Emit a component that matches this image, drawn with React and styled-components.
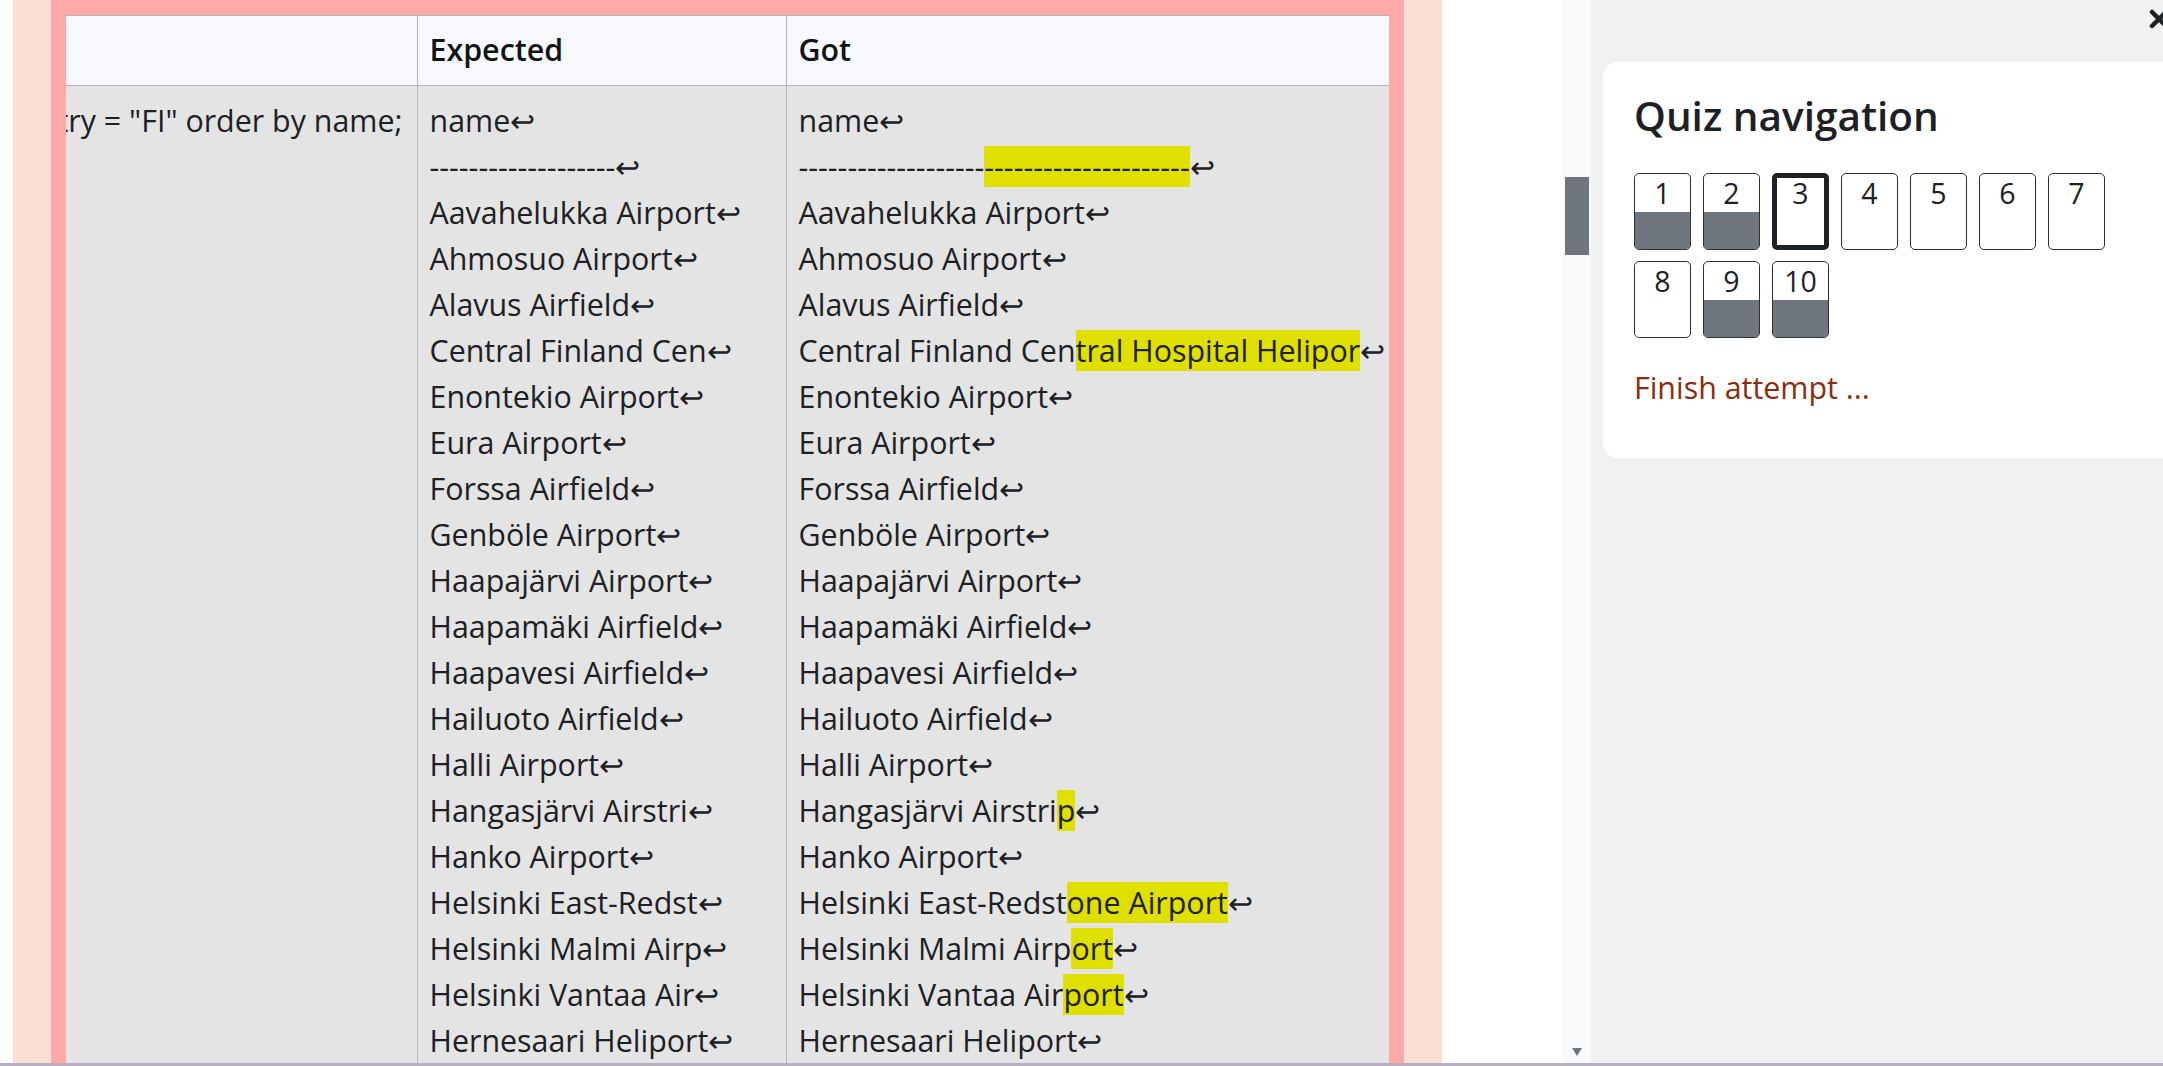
import React from "react";
import styled, { createGlobalStyle } from "styled-components";

const GlobalStyle = createGlobalStyle`
  html, body {
    margin: 0;
    padding: 0;
    height: 100%;
    overflow: hidden;
  }
  body {
    font-family: "Open Sans", "Liberation Sans", sans-serif;
    color: #1d2125;
    background: #ffffff;
  }
`;

const PageDiv = styled.div`
  display: flex;
  flex-direction: column;
  height: 100vh;
`;

const ScreenRowDiv = styled.div`
  display: flex;
  flex: 1;
  min-height: 0;
  overflow: hidden;
`;

const BottomEdgeDiv = styled.div`
  height: 3px;
  flex-shrink: 0;
  background: #b8b0c2;
`;

/* ---------- main column ---------- */

const MainDiv = styled.div`
  display: flex;
  width: 1591px;
  flex-shrink: 0;
  padding-left: 13px;
  box-sizing: border-box;
  background: #ffffff;
`;

const OutcomeDiv = styled.div`
  width: 1429px;
  flex-shrink: 0;
  padding: 0 38px;
  box-sizing: border-box;
  background: #fcdfd4;
`;

const FeedbackDiv = styled.div`
  height: 100%;
  padding: 15px 15px 0;
  box-sizing: border-box;
  background: #ffa8a8;
  overflow: hidden;
`;

const ResultTable = styled.table`
  width: 1323px;
  table-layout: fixed;
  border-collapse: collapse;
  font-size: 30.4px;
  line-height: 46px;
  border-top: 1px solid #b4b4b4;
`;

const HeadCell = styled.th`
  background: #f7f8fc;
  font-weight: 600;
  text-align: left;
  padding: 11px 12px 12px;
  border-bottom: 1px solid #b4b4b4;
  border-left: ${(p) => (p.$first ? "none" : "1px solid #b8b8b8")};
  color: #111417;
`;

const BodyCell = styled.td`
  background: #e4e4e4;
  vertical-align: top;
  padding: ${(p) => (p.$first ? "12px 14px 0 0" : "12px 12px 0")};
  border-left: ${(p) => (p.$first ? "none" : "1px solid #b8b8b8")};
  color: #1d2125;
`;

const QueryDiv = styled.div`
  display: flex;
  justify-content: flex-end;
  overflow: hidden;
  white-space: nowrap;
`;

const OutputLineDiv = styled.div`
  height: 46px;
  white-space: nowrap;
`;

const DiffSpan = styled.span`
  background: #e0e000;
`;

const ReturnSpan = styled.span`
  font-family: "DejaVu Sans", sans-serif;
  font-size: 30px;
  font-weight: 300;
  line-height: 0;
`;

const SpacerDiv = styled.div`
  flex: 1;
`;

const ScrollTrackDiv = styled.div`
  width: 28px;
  flex-shrink: 0;
  display: flex;
  flex-direction: column;
  align-items: center;
  padding-top: 177px;
  box-sizing: border-box;
  background: #f8f9fa;
`;

const ScrollThumbDiv = styled.div`
  width: 24px;
  height: 78px;
  background: #6f767e;
`;

const ScrollArrowDiv = styled.div`
  width: 0;
  height: 0;
  margin-bottom: 7px;
  border-left: 5px solid transparent;
  border-right: 5px solid transparent;
  border-top: 8px solid #6f767e;
`;

/* ---------- drawer ---------- */

const DrawerDiv = styled.div`
  flex: 1;
  min-width: 0;
  display: flex;
  flex-direction: column;
  padding-left: 12px;
  background: #f1f1f1;
  overflow: hidden;
`;

const DrawerHeaderDiv = styled.div`
  height: 62px;
  flex-shrink: 0;
  display: flex;
  justify-content: flex-end;
  align-items: flex-start;
  padding-top: 9px;
  box-sizing: border-box;
`;

const CloseSvg = styled.svg`
  width: 20px;
  height: 20px;
  margin-right: -6px;
`;

const CardDiv = styled.div`
  width: 590px;
  flex-shrink: 0;
  background: #ffffff;
  border-radius: 15px;
  padding: 30px 31px 47px;
  box-sizing: border-box;
`;

const CardTitleH3 = styled.h3`
  margin: 0 0 34px;
  font-size: 40.5px;
  line-height: 47.4px;
  font-weight: 600;
  color: #1d2125;
`;

const ButtonsGridDiv = styled.div`
  display: grid;
  grid-template-columns: repeat(7, 57px);
  column-gap: 12px;
  row-gap: 11px;
  margin-bottom: 27px;
`;

const QnButton = styled.div`
  width: 57px;
  height: 77px;
  box-sizing: border-box;
  display: flex;
  flex-direction: column;
  border: ${(p) => (p.$current ? "5px solid #1d2125" : "1px solid #2b3035")};
  border-radius: 5px;
  background: #ffffff;
  overflow: hidden;
`;

const QnNumberDiv = styled.div`
  flex: 1;
  margin-top: ${(p) => (p.$current ? "-4px" : "0")};
  text-align: center;
  font-size: 28.5px;
  line-height: 38px;
  color: #1d2125;
`;

const QnFillDiv = styled.div`
  height: 38px;
  background: ${(p) => (p.$answered ? "#6f767e" : "transparent")};
`;

const FinishLink = styled.a`
  display: block;
  font-size: 30.4px;
  line-height: 45.6px;
  color: #8e2d0b;
  text-decoration: none;
`;

const expectedLines = [
  "name",
  "-------------------",
  "Aavahelukka Airport",
  "Ahmosuo Airport",
  "Alavus Airfield",
  "Central Finland Cen",
  "Enontekio Airport",
  "Eura Airport",
  "Forssa Airfield",
  "Genböle Airport",
  "Haapajärvi Airport",
  "Haapamäki Airfield",
  "Haapavesi Airfield",
  "Hailuoto Airfield",
  "Halli Airport",
  "Hangasjärvi Airstri",
  "Hanko Airport",
  "Helsinki East-Redst",
  "Helsinki Malmi Airp",
  "Helsinki Vantaa Air",
  "Hernesaari Heliport",
  "Hyvinkää Airfield",
];

const gotLines = [
  ["name", ""],
  ["-------------------", "---------------------"],
  ["Aavahelukka Airport", ""],
  ["Ahmosuo Airport", ""],
  ["Alavus Airfield", ""],
  ["Central Finland Cen", "tral Hospital Helipor"],
  ["Enontekio Airport", ""],
  ["Eura Airport", ""],
  ["Forssa Airfield", ""],
  ["Genböle Airport", ""],
  ["Haapajärvi Airport", ""],
  ["Haapamäki Airfield", ""],
  ["Haapavesi Airfield", ""],
  ["Hailuoto Airfield", ""],
  ["Halli Airport", ""],
  ["Hangasjärvi Airstri", "p"],
  ["Hanko Airport", ""],
  ["Helsinki East-Redst", "one Airport"],
  ["Helsinki Malmi Airp", "ort"],
  ["Helsinki Vantaa Air", "port"],
  ["Hernesaari Heliport", ""],
  ["Hyvinkää Airfield", ""],
];

const quizButtons = [
  { n: 1, answered: true },
  { n: 2, answered: true },
  { n: 3, current: true },
  { n: 4 },
  { n: 5 },
  { n: 6 },
  { n: 7 },
  { n: 8 },
  { n: 9, answered: true },
  { n: 10, answered: true },
];

const App = () => {
  return (
    <PageDiv>
      <GlobalStyle />
      <ScreenRowDiv>
        <MainDiv>
          <OutcomeDiv>
            <FeedbackDiv>
              <ResultTable>
                <colgroup>
                  <col style={{ width: "351px" }} />
                  <col style={{ width: "369px" }} />
                  <col />
                </colgroup>
                <thead>
                  <tr>
                    <HeadCell $first></HeadCell>
                    <HeadCell>Expected</HeadCell>
                    <HeadCell>Got</HeadCell>
                  </tr>
                </thead>
                <tbody>
                  <tr>
                    <BodyCell $first>
                      <QueryDiv>
                        select name from airport where iso_country = "FI" order by name;
                      </QueryDiv>
                    </BodyCell>
                    <BodyCell>
                      {expectedLines.map((line, i) => (
                        <OutputLineDiv key={i}>
                          {line}
                          <ReturnSpan>↩</ReturnSpan>
                        </OutputLineDiv>
                      ))}
                    </BodyCell>
                    <BodyCell>
                      {gotLines.map(([plain, diff], i) => (
                        <OutputLineDiv key={i}>
                          {plain}
                          {diff && <DiffSpan>{diff}</DiffSpan>}
                          <ReturnSpan>↩</ReturnSpan>
                        </OutputLineDiv>
                      ))}
                    </BodyCell>
                  </tr>
                </tbody>
              </ResultTable>
            </FeedbackDiv>
          </OutcomeDiv>
          <SpacerDiv />
          <ScrollTrackDiv>
            <ScrollThumbDiv />
            <SpacerDiv />
            <ScrollArrowDiv />
          </ScrollTrackDiv>
        </MainDiv>

        <DrawerDiv>
          <DrawerHeaderDiv>
            <CloseSvg viewBox="0 0 20 20">
              <path
                d="M3 3 L17 17 M17 3 L3 17"
                stroke="#1d2125"
                strokeWidth="4.5"
                strokeLinecap="round"
              />
            </CloseSvg>
          </DrawerHeaderDiv>
          <CardDiv>
            <CardTitleH3>Quiz navigation</CardTitleH3>
            <ButtonsGridDiv>
              {quizButtons.map((b) => (
                <QnButton key={b.n} $current={b.current}>
                  <QnNumberDiv $current={b.current}>{b.n}</QnNumberDiv>
                  <QnFillDiv $answered={b.answered} />
                </QnButton>
              ))}
            </ButtonsGridDiv>
            <FinishLink href="#">Finish attempt ...</FinishLink>
          </CardDiv>
        </DrawerDiv>
      </ScreenRowDiv>
      <BottomEdgeDiv />
    </PageDiv>
  );
};

export default App;
